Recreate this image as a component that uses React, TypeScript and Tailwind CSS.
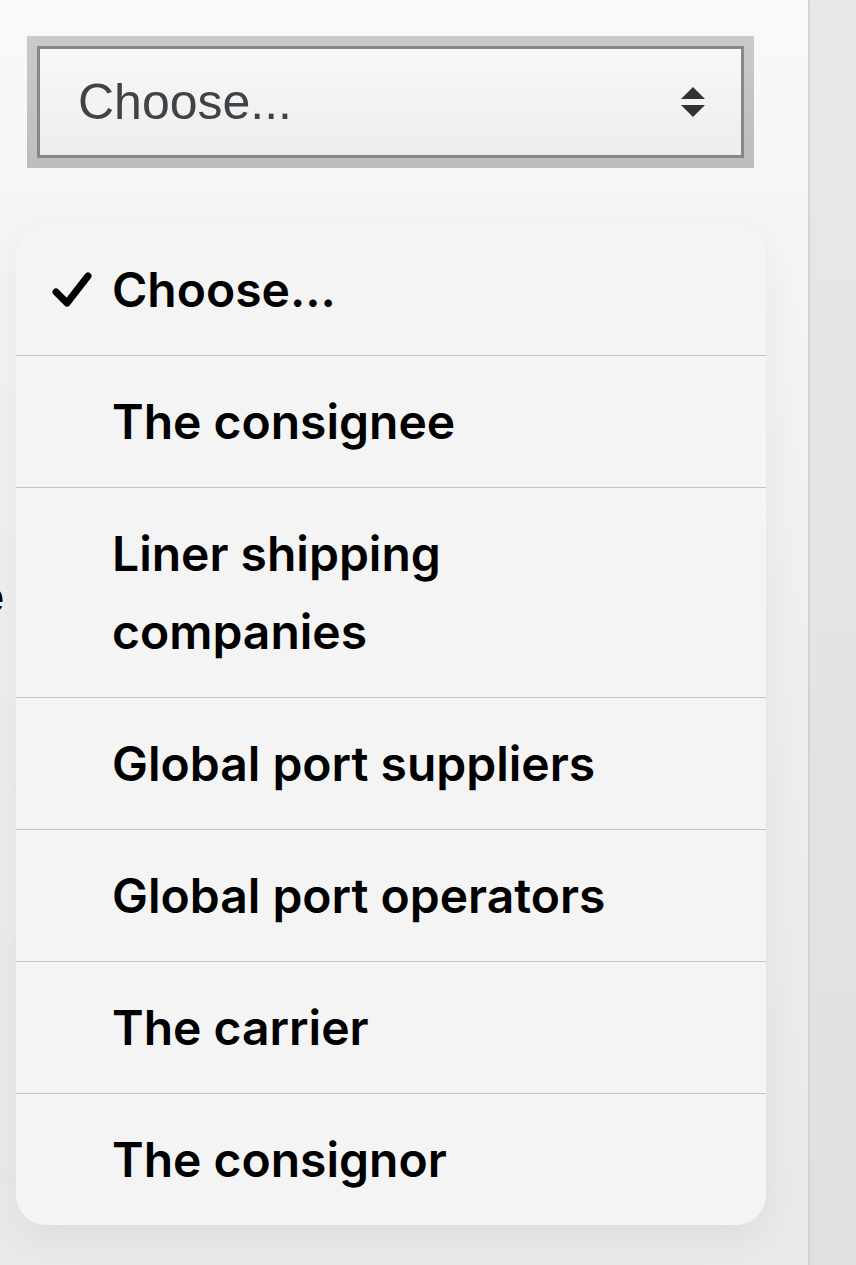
import React from "react";

const items = [
  "Choose...",
  "The consignee",
  "Liner shipping companies",
  "Global port suppliers",
  "Global port operators",
  "The carrier",
  "The consignor",
];

export default function App() {
  return (
    <div className="flex w-[856px] h-[1265px] overflow-hidden" style={{ fontFamily: "Inter, 'Noto Sans', sans-serif" }}>
      <div className="relative w-[808px] h-full bg-gradient-to-b from-[#f9f9f9] via-[#efefef] to-[#e9e9e9] px-[16px] pt-[36px]">
        <span
          className="absolute left-[-24px] top-[572px] text-[48px] font-semibold leading-none text-black"
        >
          e
        </span>
        <div className="ml-[11px] w-[727px] h-[132px] p-[10px] bg-gradient-to-b from-[#cacaca] to-[#bdbdbd]">
          <div className="flex h-full items-center justify-between border-[3px] border-[#878787] bg-gradient-to-b from-[#f8f8f8] to-[#ededed] pl-[38px] pr-[36px]">
            <span
              className="text-[50px] leading-none text-[#3e4348]"
              style={{ fontFamily: "'Liberation Sans', Arial, sans-serif" }}
            >
              Choose...
            </span>
            <svg width="24" height="30" viewBox="0 0 24 30">
              <path d="M12 0 L24 12 L0 12 Z" fill="#2f3336" />
              <path d="M0 18 L24 18 L12 30 Z" fill="#2f3336" />
            </svg>
          </div>
        </div>
        <div className="relative mt-[56px] w-[750px] rounded-[30px] bg-[#f4f4f4] shadow-[0_10px_40px_rgba(0,0,0,0.06)] overflow-hidden">
          {items.map((t, i) => (
            <div
              key={t}
              className={
                "relative flex items-center pl-[96px] pr-[40px] " +
                (i === 2 ? "h-[210px] " : i === items.length - 1 ? "h-[131px] " : "h-[132px] ") +
                (i < items.length - 1 ? "border-b border-[#c3c3c3]" : "")
              }
            >
              {i === 0 && (
                <svg className="absolute left-[36px] top-[48px]" width="40" height="36" viewBox="0 0 40 36">
                  <path d="M4 20 L15 31 L36 4" fill="none" stroke="#000" strokeWidth="7" strokeLinecap="round" strokeLinejoin="round" />
                </svg>
              )}
              <span className="text-[48px] font-semibold leading-[78px] text-black w-[560px]">{t}</span>
            </div>
          ))}
        </div>
      </div>
      <div className="w-[2px] h-full bg-[#d1d4d7]" />
      <div className="flex-1 h-full bg-gradient-to-b from-[#e8e8e8] to-[#e0e0e0]" />
    </div>
  );
}
